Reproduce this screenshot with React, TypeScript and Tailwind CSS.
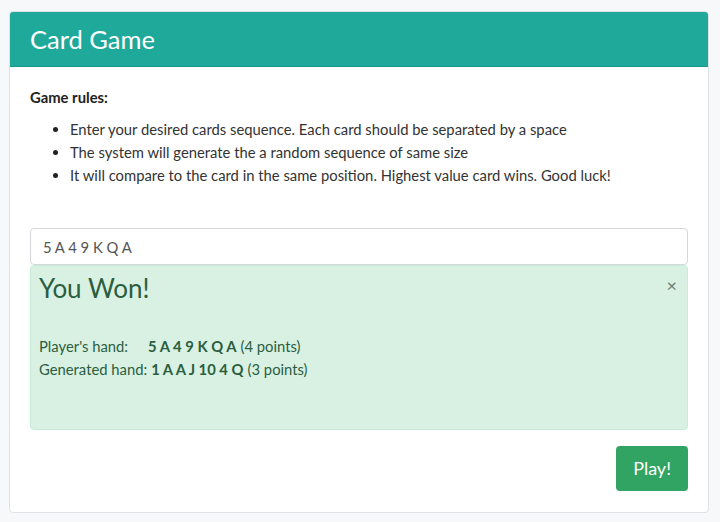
import { useState } from "react";

export default function App() {
  const [cards, setCards] = useState("5 A 4 9 K Q A");
  const [showResult, setShowResult] = useState(true);

  return (
    <div className="min-h-[522px] bg-[#f7f8fa] pl-[9px] pr-[11px] pt-[11px] pb-[10px] font-['Lato','Noto_Sans',sans-serif] text-[#222]">
      <div className="overflow-hidden rounded border border-[#dfe2e6] bg-white">
        <div className="flex h-[55px] items-center border-b border-[#1a9a8d] bg-[#1fa99b] px-5">
          <h1 className="text-[25.5px] text-white">Card Game</h1>
        </div>

        <div className="px-5 pt-[19px] pb-[21px]">
          <p className="text-[14.8px] font-bold text-[#222]">Game rules:</p>
          <ul className="mt-[10px] list-disc pl-10 text-[14.8px] leading-[23px] text-[#333] marker:text-[#222]">
            <li>Enter your desired cards sequence. Each card should be separated by a space</li>
            <li>The system will generate the a random sequence of same size</li>
            <li>It will compare to the card in the same position. Highest value card wins. Good luck!</li>
          </ul>

          <input
            value={cards}
            onChange={(e) => setCards(e.target.value)}
            className="mt-[41px] h-[37px] w-full rounded border border-[#d4d7db] px-3 text-[14.8px] text-[#555] outline-none"
          />

          <div className="min-h-[165px]">
            {showResult && (
              <div className="relative h-[165px] rounded border border-[#c8ebd6] bg-[#d8f1e3] px-2 pt-[7px] text-[#2b5e3f]">
                <button
                  onClick={() => setShowResult(false)}
                  className="absolute right-[10px] top-[10px] text-[18px] leading-none text-[#6b7d72]"
                >
                  ×
                </button>
                <h2 className="text-[26px] leading-[30px]">You Won!</h2>
                <div className="mt-[32px] text-[14.8px] leading-[23px]">
                  <div className="flex">
                    <span className="w-[109px]">Player's hand:</span>
                    <b>5 A 4 9 K Q A</b>
                    <span className="ml-1">(4 points)</span>
                  </div>
                  <div className="flex">
                    <span className="mr-1">Generated hand:</span>
                    <b>1 A A J 10 4 Q</b>
                    <span className="ml-1">(3 points)</span>
                  </div>
                </div>
              </div>
            )}
          </div>

          <div className="mt-4 flex justify-end">
            <button className="h-[45px] rounded bg-[#31a362] px-[17px] text-[18px] text-white">Play!</button>
          </div>
        </div>
      </div>
    </div>
  );
}
